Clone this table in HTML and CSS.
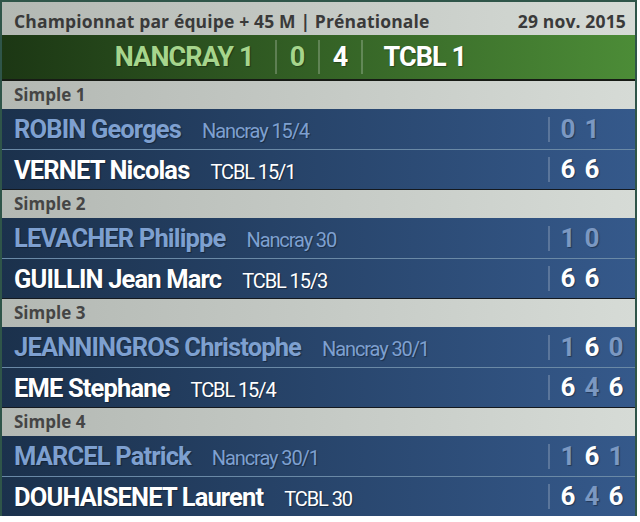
FILE: index.html
```html
<!DOCTYPE html>
<html lang="fr">
<head>
<meta charset="utf-8">
<title>Championnat par équipe</title>
<link rel="stylesheet" href="styles.css">
</head>
<body>
<div class="card">
  <div class="title"><span>Championnat par équipe + 45 M | Prénationale</span><span>29 nov. 2015</span></div>
  <div class="teams">
    <div class="team home lose">NANCRAY 1</div>
    <div class="tscore"><span class="lose">0</span><span class="win">4</span></div>
    <div class="team away win">TCBL 1</div>
  </div>

  <div class="match">
    <div class="mhead">Simple 1</div>
    <div class="player lose"><span class="name">ROBIN Georges</span><span class="club">Nancray 15/4</span><div class="sets"><span class="l">0</span><span class="l">1</span><span></span></div></div>
    <div class="player win"><span class="name">VERNET Nicolas</span><span class="club">TCBL 15/1</span><div class="sets"><span class="w">6</span><span class="w">6</span><span></span></div></div>
  </div>

  <div class="match">
    <div class="mhead">Simple 2</div>
    <div class="player lose"><span class="name">LEVACHER Philippe</span><span class="club">Nancray 30</span><div class="sets"><span class="l">1</span><span class="l">0</span><span></span></div></div>
    <div class="player win"><span class="name">GUILLIN Jean Marc</span><span class="club">TCBL 15/3</span><div class="sets"><span class="w">6</span><span class="w">6</span><span></span></div></div>
  </div>

  <div class="match">
    <div class="mhead">Simple 3</div>
    <div class="player lose"><span class="name">JEANNINGROS Christophe</span><span class="club">Nancray 30/1</span><div class="sets"><span class="l">1</span><span class="w">6</span><span class="l">0</span></div></div>
    <div class="player win"><span class="name">EME Stephane</span><span class="club">TCBL 15/4</span><div class="sets"><span class="w">6</span><span class="l">4</span><span class="w">6</span></div></div>
  </div>

  <div class="match">
    <div class="mhead">Simple 4</div>
    <div class="player lose"><span class="name">MARCEL Patrick</span><span class="club">Nancray 30/1</span><div class="sets"><span class="l">1</span><span class="w">6</span><span class="l">1</span></div></div>
    <div class="player win"><span class="name">DOUHAISENET Laurent</span><span class="club">TCBL 30</span><div class="sets"><span class="w">6</span><span class="l">4</span><span class="w">6</span></div></div>
  </div>
</div>
</body>
</html>
```

FILE: styles.css
```css
* { box-sizing: border-box; }
html, body { margin: 0; background: #ffffff; }
body { font-family: Roboto, "Liberation Sans", sans-serif; }

.card {
  width: 637px;
  border: 2px solid #2f5549;
  border-bottom: none;
}

.title {
  height: 33px;
  display: flex;
  justify-content: space-between;
  align-items: center;
  padding: 4px 9px 0 12px;
  background: linear-gradient(90deg, #b3b8b3, #d6dbd6);
  font: 700 17.5px "Open Sans", sans-serif;
  letter-spacing: 0.15px;
  color: #3a3a3a;
}

.teams {
  height: 46px;
  display: grid;
  grid-template-columns: 1fr auto 1fr;
  align-items: center;
  background: linear-gradient(90deg, #1c3714, #4c8c37);
  border-bottom: 2px solid #171b15;
  font: 700 27px Roboto, sans-serif;
  letter-spacing: -0.9px;
  text-shadow: 1px 1px 1px rgba(0,0,0,.35);
}
.team.home { text-align: right; padding-right: 21px; }
.team.away { padding-left: 21px; }
.teams .lose { color: #a6d58c; }
.teams .win { color: #ffffff; }
.tscore {
  display: flex;
  border-left: 2px solid rgba(255,255,255,.22);
}
.tscore span {
  width: 43px;
  height: 34px;
  line-height: 34px;
  text-align: center;
  border-right: 2px solid rgba(255,255,255,.22);
}

.match + .match { border-top: 1px solid #14191f; }

.mhead {
  height: 28px;
  line-height: 28px;
  padding: 2px 0 0 12px;
  background: linear-gradient(90deg, #b3b8b3, #d6dbd6);
  font: 700 17px "Open Sans", sans-serif;
  color: #454545;
}

.player {
  height: 40px;
  display: flex;
  align-items: baseline;
  padding: 0 7px 0 12px;
  background: linear-gradient(90deg, #1b314c, #35598b);
  font-family: Roboto, sans-serif;
  text-shadow: 1px 1px 1px rgba(0,0,0,.35);
}
.player + .player { border-top: 1px solid #6a89a6; }
.player .name { font-size: 25.5px; font-weight: 700; letter-spacing: -0.85px; line-height: 40px; }
.player .club { font-size: 20px; letter-spacing: -1.1px; margin-left: 21px; }
.player.lose { color: #7ea0d0; }
.player.win { color: #ffffff; }

.sets {
  margin-left: auto;
  align-self: center;
  display: flex;
  height: 25px;
  padding-left: 6px;
  border-left: 2px solid rgba(255,255,255,.2);
  font-size: 26px;
  font-weight: 700;
  line-height: 25px;
}
.sets span { width: 24px; text-align: center; }
.sets .l { color: #7b98c2; }
.sets .w { color: #ffffff; }
```
